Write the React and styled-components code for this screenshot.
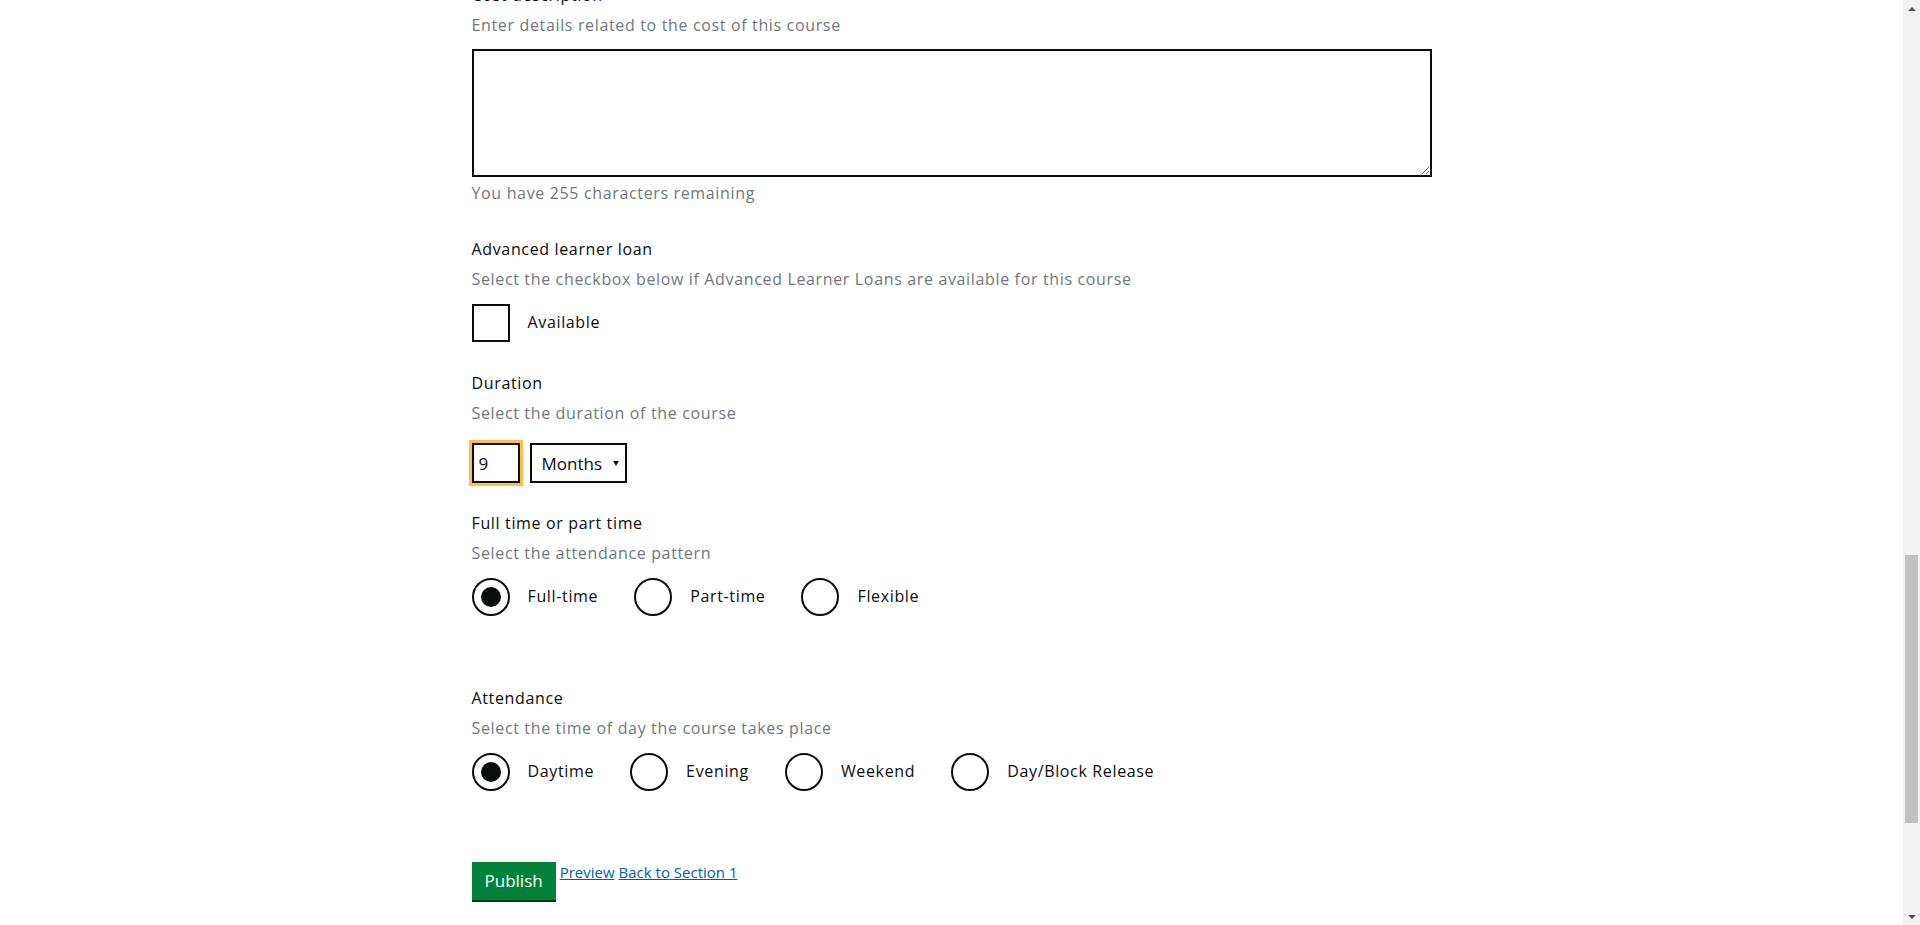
import React, { useLayoutEffect, useRef } from 'react';
import styled, { createGlobalStyle } from 'styled-components';

const GlobalStyle = createGlobalStyle`
  html, body {
    margin: 0;
    padding: 0;
    background: #fff;
  }
  body {
    padding-right: 17px;
    font-family: "Open Sans", "Liberation Sans", Arial, sans-serif;
    color: #0b0c0c;
  }
  * { box-sizing: border-box; }
`;

const Page = styled.main`
  max-width: 960px;
  margin: 0 auto;
  padding-top: 23px;
  min-height: 3200px;
`;

// classic window scrollbar, drawn since the capture hides the native one
const ScrollBar = styled.div`
  position: fixed;
  top: 0;
  right: 0;
  display: flex;
  flex-direction: column;
  width: 17px;
  height: 100vh;
  background: #f1f1f1;
`;

const ScrollArrow = styled.span`
  display: flex;
  align-items: center;
  justify-content: center;
  height: 17px;

  &::before {
    content: '';
    border-left: 4px solid transparent;
    border-right: 4px solid transparent;
    ${(p) => (p.$down ? 'border-top' : 'border-bottom')}: 4px solid #505050;
  }
`;

const ScrollTrack = styled.div`
  flex: 1;
  padding: 0 2px;
`;

const ScrollThumb = styled.div`
  height: 268px;
  margin-top: 538px;
  background: #c1c1c1;
`;

const Caption = styled.span`
  display: block;
  font-size: 19px;
  line-height: 24px;
  color: #6f777b;
`;

const Heading = styled.h1`
  margin: 4px 0 30px;
  font-size: 36px;
  line-height: 44px;
  font-weight: 700;
`;

const FormGroup = styled.div`
  margin-bottom: ${(p) => p.$spacing || 32}px;
`;

const Label = styled.label`
  display: block;
  font-size: 16px;
  line-height: 24px;
  letter-spacing: 0.65px;
  color: #0b0c0c;
`;

const Hint = styled.span`
  display: block;
  margin-top: ${(p) => p.$top ?? 6}px;
  font-size: 16px;
  line-height: 24px;
  letter-spacing: 0.65px;
  color: #6f777b;
`;

const TextArea = styled.textarea`
  display: block;
  width: 100%;
  height: 128px;
  margin-top: 12px;
  padding: 5px;
  border: 2px solid #0b0c0c;
  border-radius: 0;
  font: inherit;
  font-size: 17px;
  outline: none;
`;

const ChoiceRow = styled.div`
  display: flex;
  align-items: center;
  margin-top: ${(p) => p.$top ?? 12}px;
`;

const Choice = styled.label`
  display: flex;
  align-items: center;
  height: 40px;
  margin-right: 20px;
  cursor: pointer;
`;

const Mark = styled.span`
  position: relative;
  flex: none;
  width: 38px;
  height: 38px;
  border: 2px solid #0b0c0c;
  border-radius: ${(p) => (p.$round ? '50%' : '0')};
  background: #fff;

  &::after {
    content: '';
    display: ${(p) => (p.$checked ? 'block' : 'none')};
    position: absolute;
    top: 7px;
    left: 7px;
    width: 20px;
    height: 20px;
    border-radius: 50%;
    background: #0b0c0c;
  }
`;

const ChoiceText = styled.span`
  padding: 0 16px 3px 18px;
  font-size: 16px;
  line-height: 24px;
  letter-spacing: 0.65px;
`;

const InputRow = styled.div`
  display: flex;
  gap: 10px;
  margin-top: 18px;
`;

const TextInput = styled.input`
  display: block;
  width: ${(p) => p.$width || 48}px;
  height: 40px;
  padding: 0 5px;
  border: 2px solid #0b0c0c;
  border-radius: 0;
  font: inherit;
  font-size: 17px;
  color: #0b0c0c;
  outline: ${(p) => (p.$focused ? '3px solid #ffbf47' : 'none')};
  outline-offset: 0;
`;

const Select = styled.select`
  appearance: none;
  width: 97px;
  height: 40px;
  padding: 0 0 0 10px;
  border: 2px solid #0b0c0c;
  border-radius: 0;
  font: inherit;
  font-size: 17px;
  color: #0b0c0c;
  background: #fff url("data:image/svg+xml,%3Csvg xmlns='http://www.w3.org/2000/svg' width='6' height='5'%3E%3Cpath d='M0 0h6L3 5z' fill='%230b0c0c'/%3E%3C/svg%3E") no-repeat right 6px center;
`;

const Actions = styled.div`
  display: flex;
  align-items: flex-start;
  gap: 4px;
`;

const Button = styled.button`
  height: 38px;
  padding: 0 13px;
  border: none;
  border-radius: 0;
  background: #00823b;
  box-shadow: 0 2px 0 #003618;
  color: #fff;
  font: inherit;
  font-size: 17px;
  line-height: 38px;
  cursor: pointer;
`;

const Link = styled.a`
  font-size: 15px;
  line-height: 20px;
  color: #005ea5;
  text-decoration: underline;
`;

const earlierFields = [
  ['Who is this course for?', 'Describe who the course is aimed at'],
  ['Entry requirements', 'Enter any qualifications or experience needed'],
  ["What you'll learn", 'Describe what learners will get from this course'],
  ["How you'll learn", 'Describe how the course will be taught'],
  ["What you'll need to bring", 'Enter any equipment learners must provide'],
  ["How you'll be assessed", 'Describe how learners will be assessed'],
];

const TextGroup = ({ label, hint, areaRef }) => (
  <FormGroup>
    <Label>{label}</Label>
    <Hint>{hint}</Hint>
    <TextArea ref={areaRef} />
    <Hint $top={4}>You have 255 characters remaining</Hint>
  </FormGroup>
);

const Radios = ({ options, checked }) => (
  <ChoiceRow>
    {options.map((o) => (
      <Choice key={o}>
        <Mark $round $checked={o === checked} />
        <ChoiceText>{o}</ChoiceText>
      </Choice>
    ))}
  </ChoiceRow>
);

export default function App() {
  const costRef = useRef(null);
  const durationRef = useRef(null);

  useLayoutEffect(() => {
    durationRef.current?.focus({ preventScroll: true });
    const top = costRef.current.getBoundingClientRect().top + window.scrollY;
    window.scrollTo(0, top - 49);
  }, []);

  return (
    <>
      <GlobalStyle />
      <Page>
        <Caption>Section 2 of 2</Caption>
        <Heading>Course details</Heading>

        {earlierFields.map(([label, hint]) => (
          <TextGroup key={label} label={label} hint={hint} />
        ))}

        <FormGroup $spacing={28}>
          <Label>Cost</Label>
          <Hint>Enter the cost of the course in pounds</Hint>
          <InputRow>
            <TextInput $width={160} />
          </InputRow>
        </FormGroup>

        <TextGroup
          label="Cost description"
          hint="Enter details related to the cost of this course"
          areaRef={costRef}
        />

        <FormGroup $spacing={28}>
          <Label>Advanced learner loan</Label>
          <Hint>Select the checkbox below if Advanced Learner Loans are available for this course</Hint>
          <ChoiceRow>
            <Choice>
              <Mark />
              <ChoiceText>Available</ChoiceText>
            </Choice>
          </ChoiceRow>
        </FormGroup>

        <FormGroup $spacing={28}>
          <Label>Duration</Label>
          <Hint>Select the duration of the course</Hint>
          <InputRow>
            <TextInput ref={durationRef} defaultValue="9" $focused />
            <Select defaultValue="Months">
              <option>Days</option>
              <option>Weeks</option>
              <option>Months</option>
              <option>Years</option>
            </Select>
          </InputRow>
        </FormGroup>

        <FormGroup $spacing={69}>
          <Label>Full time or part time</Label>
          <Hint>Select the attendance pattern</Hint>
          <Radios options={['Full-time', 'Part-time', 'Flexible']} checked="Full-time" />
        </FormGroup>

        <FormGroup $spacing={70}>
          <Label>Attendance</Label>
          <Hint>Select the time of day the course takes place</Hint>
          <Radios
            options={['Daytime', 'Evening', 'Weekend', 'Day/Block Release']}
            checked="Daytime"
          />
        </FormGroup>

        <Actions>
          <Button type="button">Publish</Button>
          <Link href="#preview">Preview</Link>
          <Link href="#section-1">Back to Section 1</Link>
        </Actions>
      </Page>

      <ScrollBar aria-hidden="true">
        <ScrollArrow />
        <ScrollTrack>
          <ScrollThumb />
        </ScrollTrack>
        <ScrollArrow $down />
      </ScrollBar>
    </>
  );
}
